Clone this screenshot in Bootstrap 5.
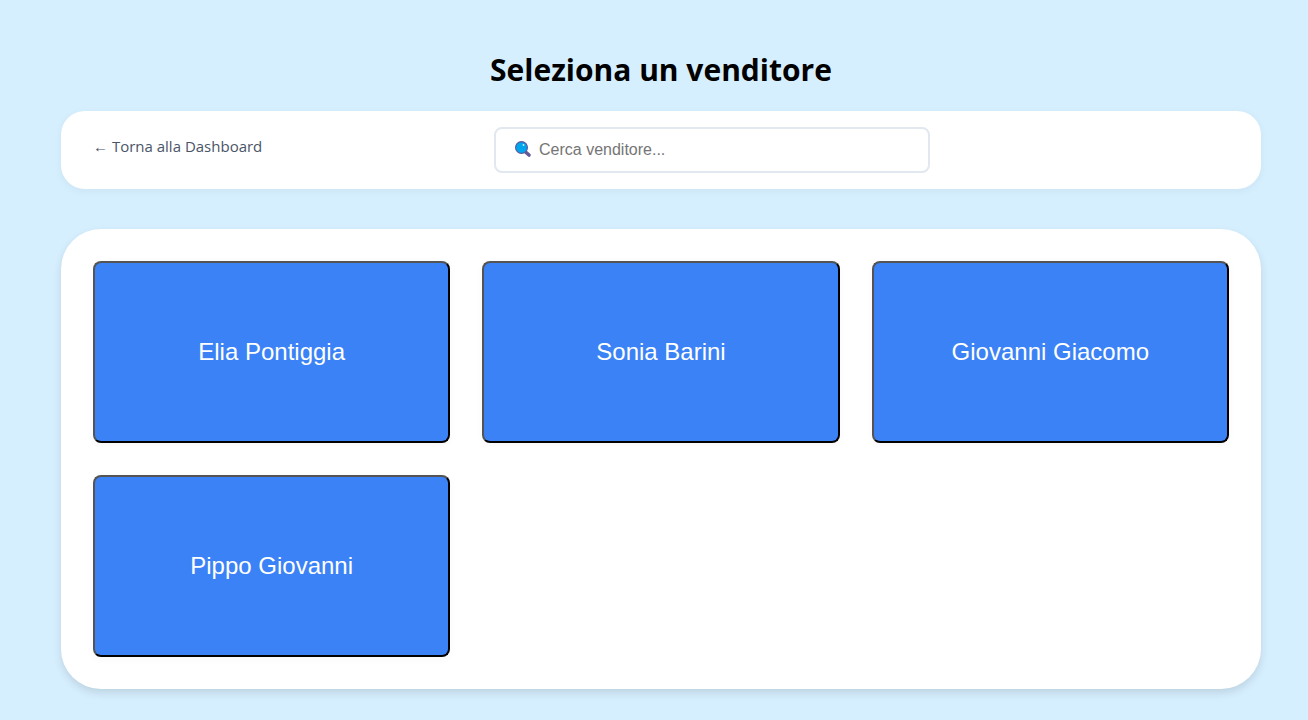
<!DOCTYPE html>
<html lang="it">
<head>
<meta charset="utf-8">
<meta name="viewport" content="width=device-width, initial-scale=1">
<title>Seleziona un venditore</title>
<link href="https://cdn.jsdelivr.net/npm/bootstrap@5.3.0/dist/css/bootstrap.min.css" rel="stylesheet">
<style>
  body {
    background: #d6efff;
    color: #000;
    font-family: "Noto Sans", "Open Sans", sans-serif;
    padding: 48px 32px 31px 46px;
  }
  .page { max-width: 1200px; }
  .page-title { font: 700 30px/44px "Open Sans", "Noto Sans", sans-serif; margin-bottom: 19px; }
  .toolbar {
    display: grid;
    grid-template-columns: 401fr 436fr 299fr;
    padding: 16px 32px;
    border-radius: 24px;
    box-shadow: 0 2px 8px rgba(0, 0, 0, .05);
    margin-bottom: 40px;
  }
  .back-link { color: #4a5568; font: 400 15px/24px "Open Sans", sans-serif; padding-top: 7px; }
  .search-icon { left: 20px; top: 13px; }
  .search-input {
    height: 46px;
    padding: 0 16px 0 43px;
    border: 2px solid #e2e8f0;
    border-radius: 8px;
    font: 16px/24px "Liberation Sans", sans-serif;
  }
  .search-input::placeholder { color: #757575; }
  .vendors {
    display: grid;
    grid-template-columns: repeat(3, 1fr);
    gap: 32px;
    padding: 32px;
    border-radius: 40px;
    box-shadow: 0 4px 8px rgba(0, 0, 0, .12);
  }
  .vendor {
    min-height: 182px;
    background: #3b82f6;
    color: #fff;
    border: 2px outset #000;
    border-radius: 8px;
    font: 24px/28px "Liberation Sans", sans-serif;
    box-shadow: 0 2px 8px rgba(0, 0, 0, .03);
  }
  .vendor:hover { background: #2563eb; }
  @media (max-width: 767px) {
    body { padding: 32px 16px; }
    .toolbar, .vendors { grid-template-columns: 1fr; }
  }
</style>
</head>
<body>
<main class="page mx-auto">
  <h1 class="page-title text-center">Seleziona un venditore</h1>
  <nav class="toolbar bg-white" aria-label="Strumenti">
    <div><a href="#" class="back-link d-inline-block text-decoration-none">← Torna alla Dashboard</a></div>
    <div class="position-relative">
      <svg class="search-icon position-absolute" width="18" height="18" viewBox="0 0 18 18" aria-hidden="true">
        <path d="M11 11.500 L15 15" stroke="#635994" stroke-width="3.600" stroke-linecap="round"/>
        <circle cx="7.500" cy="7.500" r="5.900" fill="#00a6ed" stroke="#5c5a9d" stroke-width="1.200"/>
        <circle cx="9.500" cy="5" r=".9" fill="#c8f2ff"/>
      </svg>
      <input type="search" class="search-input w-100 d-block bg-white" placeholder="Cerca venditore..." aria-label="Cerca venditore">
    </div>
  </nav>
  <section class="vendors bg-white" aria-label="Venditori">
    <button type="button" class="vendor">Elia Pontiggia</button>
    <button type="button" class="vendor">Sonia Barini</button>
    <button type="button" class="vendor">Giovanni Giacomo</button>
    <button type="button" class="vendor">Pippo Giovanni</button>
  </section>
</main>
<script src="https://cdn.jsdelivr.net/npm/bootstrap@5.3.0/dist/js/bootstrap.bundle.min.js"></script>
</body>
</html>
